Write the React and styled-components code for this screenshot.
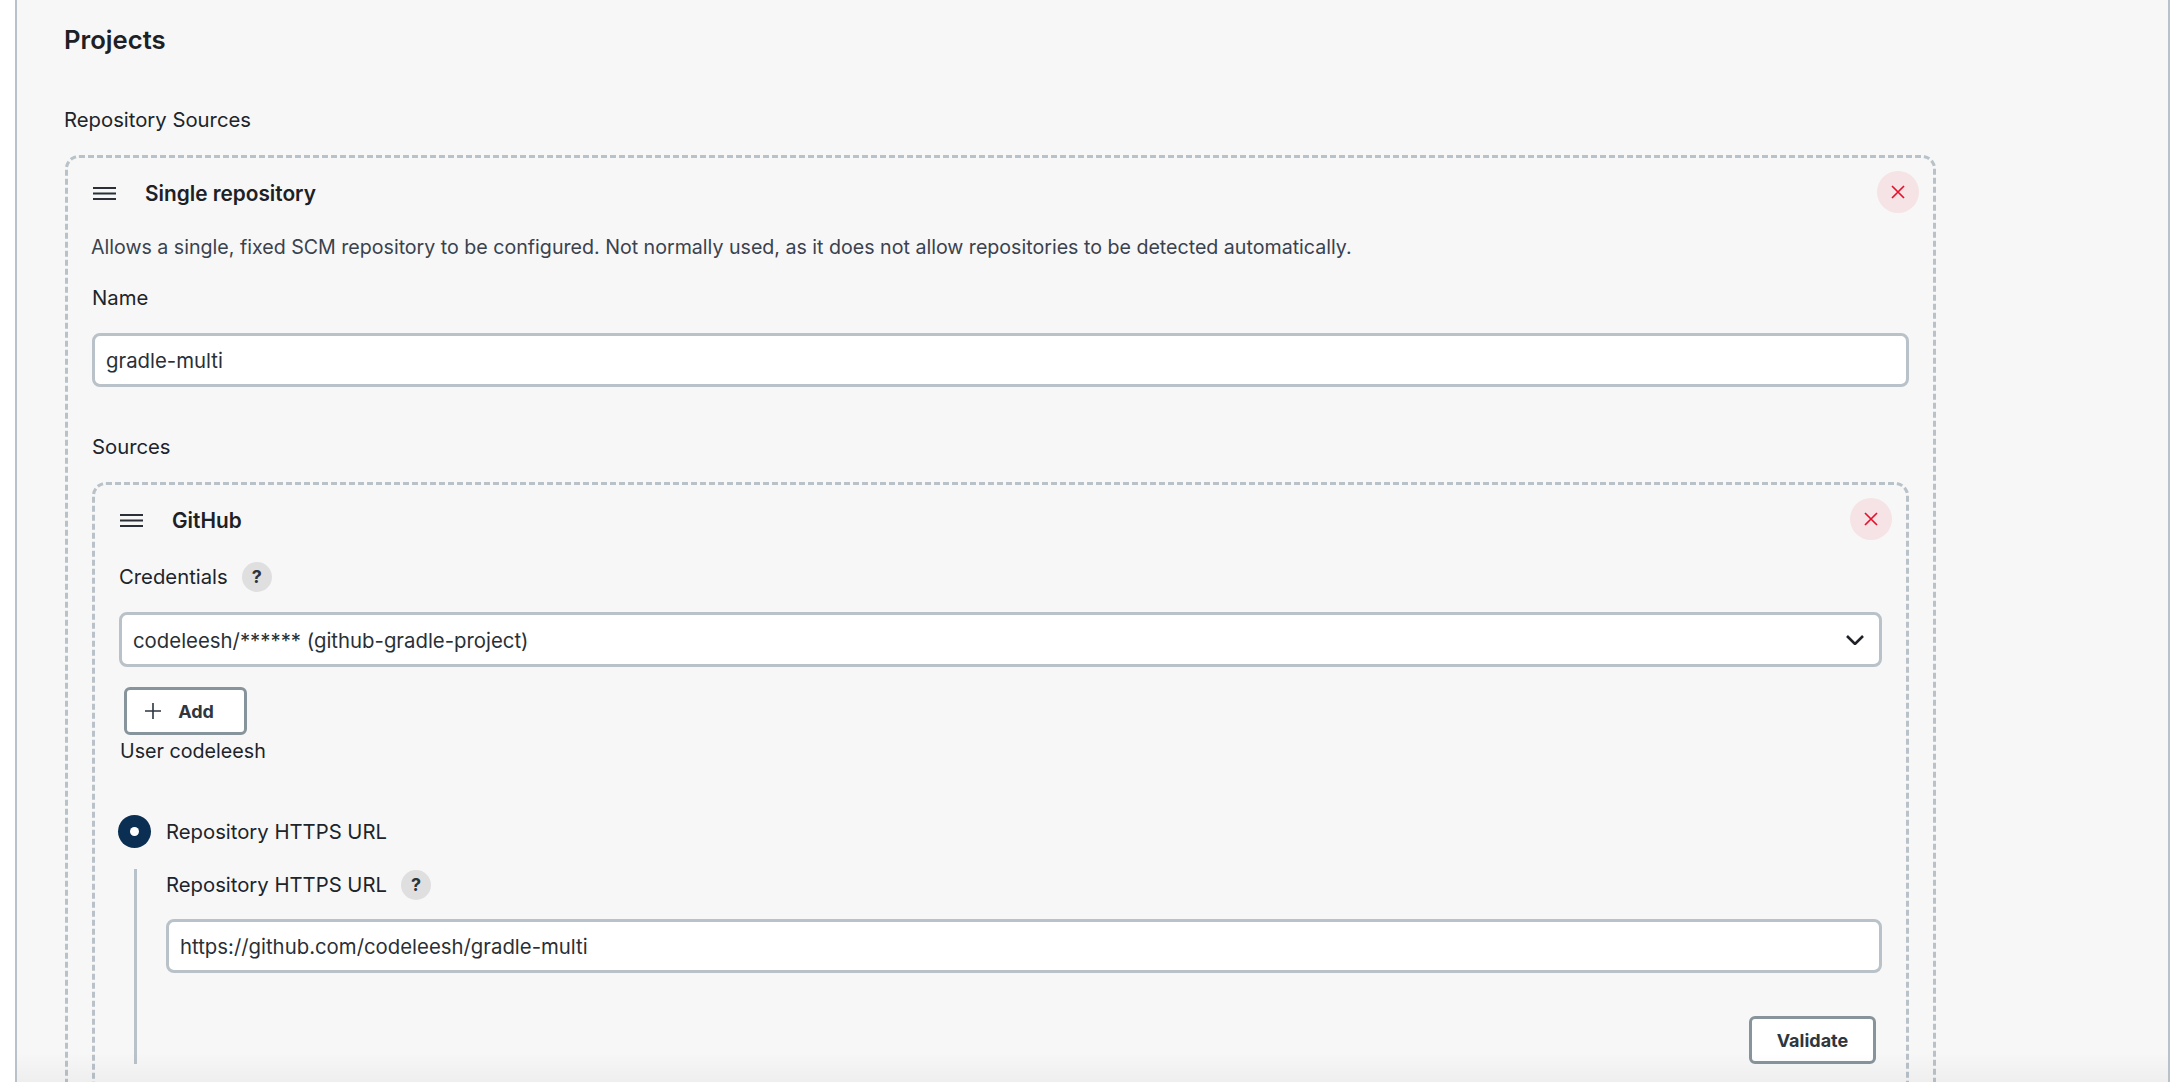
import React from "react";
import styled, { createGlobalStyle } from "styled-components";

const GlobalStyle = createGlobalStyle`
  html, body {
    margin: 0;
    background: #fff;
    overflow: hidden;
  }
  body {
    font-family: Inter, "Liberation Sans", sans-serif;
    color: #1f2328;
  }
`;

const Panel = styled.main`
  box-sizing: border-box;
  position: relative;
  width: 2155px;
  height: 1082px;
  margin-left: 15px;
  padding: 0 0 0 48px;
  background: #f7f7f7;
  border-left: 2px solid #b8c2c8;
  border-right: 2px solid #b8c2c8;
  overflow: hidden;
`;

const Title = styled.h2`
  margin: 0 0 0 -1px;
  padding-top: 22px;
  font-size: 25.7px;
  line-height: 36px;
  font-weight: 600;
  color: #1d2126;
`;

const Label = styled.div`
  font-size: 20.3px;
  line-height: 28px;
  color: #20242a;
`;

const SectionLabel = styled(Label)`
  margin: ${(p) => p.$top}px 0 0 -1px;
`;

const Card = styled.section`
  box-sizing: border-box;
  width: ${(p) => p.$width}px;
  margin-top: ${(p) => p.$top}px;
  padding: 13px 24px 120px 24px;
  border: 3px dashed #b8c2c8;
  border-radius: 14px;
`;

const CardHead = styled.div`
  display: flex;
  align-items: center;
  height: 42px;
  margin-right: -10px;
`;

const Handle = styled.svg`
  width: 23px;
  height: 13px;
  margin: 2px 29px 0 1px;
  flex: none;
`;

const CardName = styled.h3`
  flex: 1;
  margin: 0;
  padding-top: 2px;
  font-size: 20.8px;
  font-weight: 600;
  color: #1d2126;
`;

const CloseButton = styled.button`
  display: flex;
  align-items: center;
  justify-content: center;
  width: 42px;
  height: 42px;
  padding: 0;
  border: 0;
  border-radius: 50%;
  background: #f5e3e5;
`;

const Description = styled.p`
  margin: 20px 0 0 -1px;
  font-size: 19.63px;
  line-height: 28px;
  color: #3a424e;
`;

const FieldLabel = styled(Label)`
  display: flex;
  align-items: center;
  gap: 14px;
  height: 30px;
  margin-top: ${(p) => p.$top}px;
`;

const Help = styled.span`
  display: flex;
  align-items: center;
  justify-content: center;
  width: 30px;
  height: 30px;
  border-radius: 50%;
  background: #dfdfdf;
  font-size: 18px;
  font-weight: 700;
  color: #2d333b;
`;

const TextBox = styled.div`
  box-sizing: border-box;
  display: flex;
  align-items: center;
  justify-content: space-between;
  height: ${(p) => p.$height}px;
  margin-top: ${(p) => p.$top}px;
  padding: 1px 15px 0 11px;
  background: #fff;
  border: 3px solid #b8c2c8;
  border-radius: 8px;
  font-size: 20.35px;
  color: #2a2f36;
`;

const OutlineButton = styled.button`
  box-sizing: border-box;
  display: flex;
  align-items: center;
  justify-content: center;
  gap: 17px;
  width: ${(p) => p.$width}px;
  height: 48px;
  padding: 0;
  background: #fff;
  border: 3px solid #87949c;
  border-radius: 6px;
  font-family: inherit;
  font-size: 18px;
  font-weight: 700;
  color: #2e3640;
`;

const AddButton = styled(OutlineButton)`
  margin: 20px 0 0 5px;
  padding-right: 12px;
`;

const UserNote = styled(Label)`
  margin: 2px 0 0 1px;
  font-size: 19.7px;
`;

const RadioRow = styled.div`
  display: flex;
  align-items: center;
  gap: 15px;
  margin: 50px 0 0 -1px;
`;

const Radio = styled.span`
  display: flex;
  align-items: center;
  justify-content: center;
  width: 33px;
  height: 33px;
  border-radius: 50%;
  background: #0b2f52;
  &::after {
    content: "";
    width: 9px;
    height: 9px;
    border-radius: 50%;
    background: #fff;
  }
`;

const Nested = styled.div`
  margin: 21px 0 0 15px;
  padding: 1px 0 0 29px;
  border-left: 3px solid #b8c2c8;
`;

const ValidateRow = styled.div`
  display: flex;
  justify-content: flex-end;
  margin: 43px 6px 0 0;
`;

const BottomFade = styled.div`
  position: absolute;
  left: 0;
  right: 0;
  bottom: 0;
  height: 30px;
  background: linear-gradient(to bottom, rgba(0, 0, 0, 0), rgba(0, 0, 0, 0.035));
  pointer-events: none;
`;

const HandleIcon = () => (
  <Handle viewBox="0 0 23 13" fill="none" stroke="#2b3036" strokeWidth="2">
    <path d="M0 1h23M0 6.5h23M0 12h23" />
  </Handle>
);

const CloseIcon = () => (
  <svg width="14" height="14" viewBox="0 0 14 14" fill="none" stroke="#e5122d" strokeWidth="1.7">
    <path d="M1 1l12 12M13 1L1 13" />
  </svg>
);

const App = () => (
  <>
    <GlobalStyle />
    <Panel>
      <Title>Projects</Title>
      <SectionLabel $top={48}>Repository Sources</SectionLabel>
      <Card $width={1871} $top={21}>
        <CardHead>
          <HandleIcon />
          <CardName>Single repository</CardName>
          <CloseButton><CloseIcon /></CloseButton>
        </CardHead>
        <Description>
          Allows a single, fixed SCM repository to be configured. Not normally used, as it does not allow repositories to be detected automatically.
        </Description>
        <FieldLabel $top={22}>Name</FieldLabel>
        <TextBox $height={54} $top={20}>gradle-multi</TextBox>
        <FieldLabel $top={45}>Sources</FieldLabel>
        <Card $width={1817} $top={20}>
          <CardHead>
            <HandleIcon />
            <CardName>GitHub</CardName>
            <CloseButton><CloseIcon /></CloseButton>
          </CardHead>
          <FieldLabel $top={22}>
            Credentials <Help>?</Help>
          </FieldLabel>
          <TextBox $height={55} $top={20}>
            codeleesh/****** (github-gradle-project)
            <svg width="18" height="10" viewBox="0 0 18 10" fill="none" stroke="#1f2328" strokeWidth="2.6">
              <path d="M1 1l8 8 8-8" />
            </svg>
          </TextBox>
          <AddButton $width={123}>
            <svg width="16" height="16" viewBox="0 0 16 16" fill="none" stroke="#2e3640" strokeWidth="1.6">
              <path d="M8 0v16M0 8h16" />
            </svg>
            Add
          </AddButton>
          <UserNote>User codeleesh</UserNote>
          <RadioRow>
            <Radio />
            <Label>Repository HTTPS URL</Label>
          </RadioRow>
          <Nested>
            <FieldLabel $top={0}>
              Repository HTTPS URL <Help>?</Help>
            </FieldLabel>
            <TextBox $height={54} $top={19}>https://github.com/codeleesh/gradle-multi</TextBox>
            <ValidateRow>
              <OutlineButton $width={127}>Validate</OutlineButton>
            </ValidateRow>
          </Nested>
        </Card>
      </Card>
      <BottomFade />
    </Panel>
  </>
);

export default App;
